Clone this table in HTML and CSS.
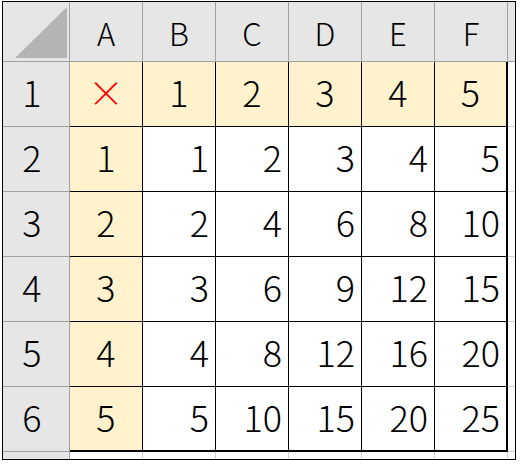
FILE: index.html
```html
<!DOCTYPE html>
<html lang="ja">
<head>
<meta charset="utf-8">
<title>九九表</title>
<link rel="stylesheet" href="styles.css">
</head>
<body>
<div class="frame">
  <div class="sheet">
    <div class="corner"><svg class="tri" width="52" height="51" viewBox="0 0 52 51"><polygon points="0,51 52,51 52,0" fill="#b4b4b4"/></svg></div>
    <div class="colhead">A</div>
    <div class="colhead">B</div>
    <div class="colhead">C</div>
    <div class="colhead">D</div>
    <div class="colhead">E</div>
    <div class="colhead">F</div>
    <div class="colhead extra"></div>

    <div class="rowhead">1</div>
    <div class="cell hdr mark">×</div>
    <div class="cell hdr">1</div>
    <div class="cell hdr">2</div>
    <div class="cell hdr">3</div>
    <div class="cell hdr">4</div>
    <div class="cell hdr last-col">5</div>
    <div class="pad"></div>

    <div class="rowhead">2</div>
    <div class="cell hdr">1</div>
    <div class="cell num">1</div>
    <div class="cell num">2</div>
    <div class="cell num">3</div>
    <div class="cell num">4</div>
    <div class="cell num last-col">5</div>
    <div class="pad"></div>

    <div class="rowhead">3</div>
    <div class="cell hdr">2</div>
    <div class="cell num">2</div>
    <div class="cell num">4</div>
    <div class="cell num">6</div>
    <div class="cell num">8</div>
    <div class="cell num last-col">10</div>
    <div class="pad"></div>

    <div class="rowhead">4</div>
    <div class="cell hdr">3</div>
    <div class="cell num">3</div>
    <div class="cell num">6</div>
    <div class="cell num">9</div>
    <div class="cell num">12</div>
    <div class="cell num last-col">15</div>
    <div class="pad"></div>

    <div class="rowhead">5</div>
    <div class="cell hdr">4</div>
    <div class="cell num">4</div>
    <div class="cell num">8</div>
    <div class="cell num">12</div>
    <div class="cell num">16</div>
    <div class="cell num last-col">20</div>
    <div class="pad"></div>

    <div class="rowhead">6</div>
    <div class="cell hdr last-row">5</div>
    <div class="cell num last-row">5</div>
    <div class="cell num last-row">10</div>
    <div class="cell num last-row">15</div>
    <div class="cell num last-row">20</div>
    <div class="cell num last-row last-col">25</div>
    <div class="pad"></div>

    <div class="rowhead tail"></div>
    <div class="blank"></div>
    <div class="blank"></div>
    <div class="blank"></div>
    <div class="blank"></div>
    <div class="blank"></div>
    <div class="blank"></div>
    <div class="blank end"></div>
  </div>
</div>
</body>
</html>
```

FILE: styles.css
```css
* { box-sizing: border-box; }

html, body {
  margin: 0;
  padding: 0;
  background: #ffffff;
}

body {
  font-family: "Noto Sans CJK JP", "Noto Sans", sans-serif;
  font-weight: 300;
  color: #000000;
}

.frame {
  margin: 1px 0 0 2px;
  width: 514px;
  height: 459px;
  border: 1px solid #000000;
  overflow: hidden;
  background: #ffffff;
}

.sheet {
  display: grid;
  grid-template-columns: 67px repeat(6, 73px) 7px;
  grid-template-rows: 60px repeat(6, 65px) 7px;
}

.corner {
  background: #e6e6e6;
  border-right: 1px solid #a0a0a0;
  border-bottom: 1px solid #a0a0a0;
  display: flex;
  justify-content: flex-end;
  align-items: flex-end;
  padding: 0 2px 3px 0;
}

.tri { display: block; }

.colhead {
  background: #e6e6e6;
  border-right: 1px solid #a0a0a0;
  border-bottom: 1px solid #a0a0a0;
  display: flex;
  align-items: center;
  justify-content: center;
  font-size: 31px;
  line-height: 1;
  padding-top: 2px;
}

.colhead.extra { border-right: none; }

.rowhead {
  background: #e6e6e6;
  border-right: 1px solid #a0a0a0;
  border-bottom: 1px solid #a0a0a0;
  display: flex;
  align-items: center;
  justify-content: center;
  font-size: 36px;
  line-height: 1;
  padding: 0 8px 6px 0;
}

.rowhead.tail { border-bottom: none; }

.cell {
  border-right: 1px solid #000000;
  border-bottom: 1px solid #000000;
  display: flex;
  align-items: center;
  font-size: 36px;
  line-height: 1;
  padding-bottom: 6px;
}

.hdr {
  background: #fff2cc;
  justify-content: center;
}

.num {
  background: #ffffff;
  justify-content: flex-end;
  padding-right: 6px;
}

.mark { color: #ff0000; }

.last-col { border-right: 2px solid #000000; }
.last-row { border-bottom: 2px solid #000000; }

.pad {
  background: #ffffff;
  border-bottom: 1px solid #d4d4d4;
}

.blank {
  background: #ffffff;
  border-right: 1px solid #d4d4d4;
}

.blank.end { border-right: none; }
```
